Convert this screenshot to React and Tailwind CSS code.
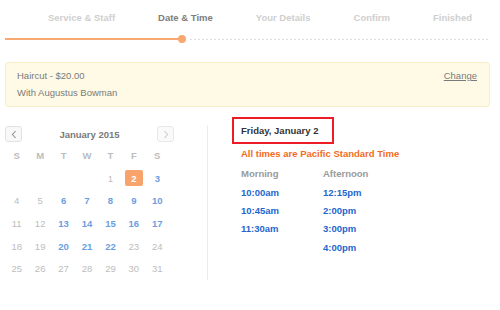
const steps = [
  { label: "Service & Staff", active: false },
  { label: "Date & Time", active: true },
  { label: "Your Details", active: false },
  { label: "Confirm", active: false },
  { label: "Finished", active: false },
];

const available = [3, 6, 7, 8, 9, 10, 13, 14, 15, 16, 17, 20, 21, 22];

function Chevron({ dir, color }) {
  return (
    <svg width="6" height="9" viewBox="0 0 6 9" fill="none">
      <path
        d={dir === "left" ? "M4.6 1 L1.4 4.5 L4.6 8" : "M1.4 1 L4.6 4.5 L1.4 8"}
        stroke={color}
        strokeWidth="1.1"
      />
    </svg>
  );
}

function Calendar() {
  const cells = [];
  for (let i = 0; i < 4; i++) cells.push(null);
  for (let d = 1; d <= 31; d++) cells.push(d);

  return (
    <div className="w-[169px]">
      <div className="flex h-[16px] items-center justify-between">
        <button className="flex h-[16px] w-[17px] items-center justify-center rounded-[3px] border border-[#e2e2e2] bg-[#f8f8f8]">
          <Chevron dir="left" color="#909090" />
        </button>
        <span className="font-bold text-[#7a7a7a]">January 2015</span>
        <button className="flex h-[16px] w-[17px] items-center justify-center rounded-[3px] border border-[#e8e8e8] bg-[#fafafa]">
          <Chevron dir="right" color="#cccccc" />
        </button>
      </div>
      <div className="mt-[2px] grid w-[164px] grid-cols-7 auto-rows-[22.7px] text-center">
        {["S", "M", "T", "W", "T", "F", "S"].map((d, i) => (
          <div key={i} className="flex items-center justify-center font-bold text-[#bdbdbd]">
            {d}
          </div>
        ))}
        {cells.map((d, i) => (
          <div key={i} className="flex items-center justify-center">
            {d === 2 ? (
              <span className="flex h-[16px] w-[18px] items-center justify-center rounded-[2px] bg-[#f8a36c] font-bold text-white">
                2
              </span>
            ) : d && available.includes(d) ? (
              <span className="font-bold text-[#6b9ee2]">{d}</span>
            ) : (
              <span className="text-[#bdbdbd]">{d}</span>
            )}
          </div>
        ))}
      </div>
    </div>
  );
}

export default function App() {
  return (
    <div className="h-[310px] w-[500px] overflow-hidden bg-white font-['Liberation_Sans',Arial,sans-serif] text-[9.5px] leading-[11px]">
      {/* steps */}
      <div className="flex gap-[43px] pl-[48px] pt-[12px] font-bold">
        {steps.map((s) => (
          <span key={s.label} className={s.active ? "text-[#7d7d7d]" : "text-[#cfcfcf]"}>
            {s.label}
          </span>
        ))}
      </div>

      {/* progress */}
      <div className="mt-[12px] flex h-[8px] items-center pl-[5px] pr-[12px]">
        <div className="h-[2px] w-[174px] bg-[#f8a870]" />
        <div className="-ml-[1px] h-[8px] w-[8px] rounded-full bg-[#f8a870]" />
        <div className="ml-[4px] h-px flex-1 bg-[repeating-linear-gradient(90deg,#dedede_0_2px,transparent_2px_4px)]" />
      </div>

      {/* summary */}
      <div className="ml-[5px] mt-[19px] flex h-[45px] w-[485px] justify-between rounded-[3px] border border-[#f7efca] bg-[#fefae5] pl-[11px] pr-[12px] pt-[5px] leading-[16.5px] text-[#7b7b7b]">
        <div>
          <div>Haircut - $20.00</div>
          <div>With Augustus Bowman</div>
        </div>
        <a className="underline">Change</a>
      </div>

      {/* date & times */}
      <div className="mt-[10px] flex">
        <div className="w-[207px] pl-[5px] pt-[9px]">
          <Calendar />
        </div>
        <div className="mt-[8px] h-[155px] w-px bg-[#ececec]" />
        <div className="pl-[33px]">
          <div className="-ml-[9px] flex h-[27px] w-[102px] items-center border-2 border-[#ee1c24] pl-[7px] font-bold text-[#333]">
            Friday, January 2
          </div>
          <div className="mt-[4px] font-bold text-[#f36b21]">All times are Pacific Standard Time</div>
          <div className="mt-[9px] grid grid-cols-[82px_auto] font-bold">
            <div>
              <div className="text-[#9a9a9a]">Morning</div>
              <div className="mt-[4.7px] leading-[18.33px] text-[#2466cf]">
                <div>10:00am</div>
                <div>10:45am</div>
                <div>11:30am</div>
              </div>
            </div>
            <div>
              <div className="text-[#9a9a9a]">Afternoon</div>
              <div className="mt-[4.7px] leading-[18.33px] text-[#2466cf]">
                <div>12:15pm</div>
                <div>2:00pm</div>
                <div>3:00pm</div>
                <div>4:00pm</div>
              </div>
            </div>
          </div>
        </div>
      </div>
    </div>
  );
}
